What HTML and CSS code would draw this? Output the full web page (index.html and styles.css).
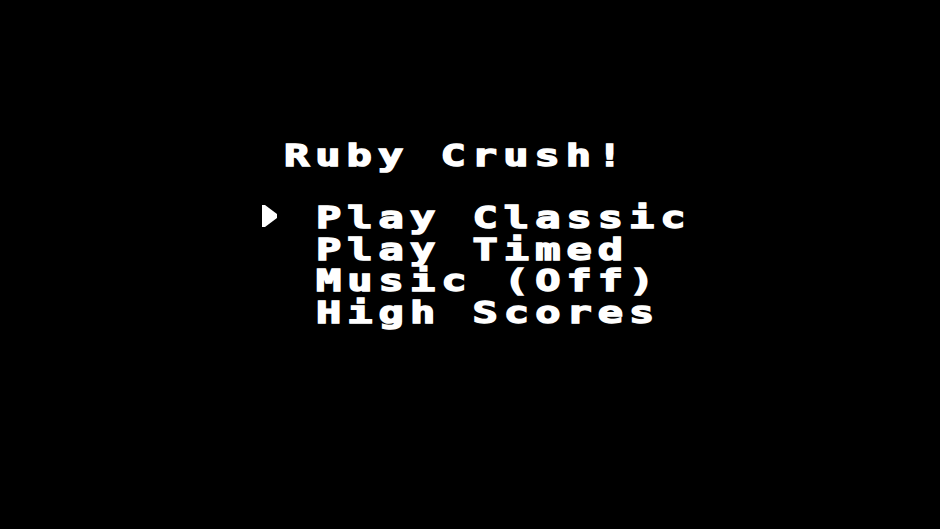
FILE: index.html
```html
<!DOCTYPE html>
<html lang="en">
<head>
<meta charset="utf-8">
<title>Ruby Crush!</title>
<link rel="stylesheet" href="styles.css">
</head>
<body>
<main class="screen">
  <div class="title"><span class="label">Ruby Crush!</span></div>
  <ul class="menu">
    <li class="item selected">
      <span class="cursor"><svg class="arrow" width="16" height="22" viewBox="0 0 16 22"><polygon points="0,0 3,0 15,9 15,13 3,22 0,22" fill="#fff"/></svg></span>
      <span class="label">Play Classic</span>
    </li>
    <li class="item"><span class="cursor"></span><span class="label">Play Timed</span></li>
    <li class="item"><span class="cursor"></span><span class="label">Music (Off)</span></li>
    <li class="item"><span class="cursor"></span><span class="label">High Scores</span></li>
  </ul>
</main>
</body>
</html>
```

FILE: styles.css
```css
html, body {
  margin: 0;
  padding: 0;
  background: #000;
  width: 940px;
  height: 529px;
  overflow: hidden;
}

.screen {
  padding: 140px 0 0 253px;
  color: #fff;
  font-family: "DejaVu Sans Mono", "Liberation Mono", monospace;
  font-weight: bold;
  font-size: 30px;
  line-height: 31.4px;
}

.label {
  display: inline-block;
  white-space: pre;
  letter-spacing: 4.3px;
  transform: scaleX(1.4);
  transform-origin: left top;
  -webkit-text-stroke: 1.4px #fff;
  text-shadow: 0 0 1px rgba(255, 255, 255, 0.6);
}

.title {
  height: 31.4px;
  padding-left: 31px;
  margin-bottom: 31px;
}

.menu {
  list-style: none;
  margin: 0;
  padding: 0;
}

.item {
  display: flex;
  height: 31.4px;
}

.cursor {
  width: 63px;
  flex: none;
  display: flex;
  align-items: flex-start;
  padding-top: 3px;
  box-sizing: border-box;
}

.arrow {
  margin-left: 9px;
  display: block;
}
```
